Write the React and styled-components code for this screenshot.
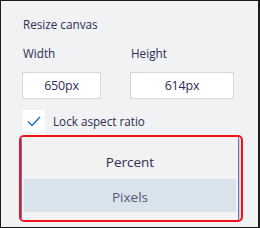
import React from "react";
import styled, { createGlobalStyle } from "styled-components";

const Global = createGlobalStyle`
  html, body { margin: 0; padding: 0; background: #f1f2f4; }
  body { font-family: "Open Sans", "Noto Sans", sans-serif; }
`;

const Frame = styled.div`
  box-sizing: border-box;
  width: 260px;
  height: 228px;
  background: #f1f2f4;
  border-style: solid;
  border-color: #1b1b1b;
  border-width: 1px 2px 1px 1px;
  padding: 15px 0 0 21px;
  display: flex;
  flex-direction: column;
  color: #2d2d52;
  overflow: hidden;
`;

const Title = styled.div`
  font-size: 11.7px;
  line-height: 16px;
  margin-left: 1px;
`;

const Fields = styled.div`
  display: flex;
  gap: 29px;
  margin-top: 13px;
`;

const Field = styled.div`
  display: flex;
  flex-direction: column;
  gap: 11px;
`;

const Label = styled.div`
  font-size: 11.7px;
  line-height: 16px;
  margin-left: 1px;
`;

const Input = styled.div`
  box-sizing: border-box;
  width: ${(p) => p.$w}px;
  height: 27px;
  background: #fff;
  border: 1px solid #d3d7de;
  display: flex;
  align-items: center;
  justify-content: center;
  font-size: 12.5px;
  color: #2d2d52;
  letter-spacing: -0.2px;
`;

const CheckRow = styled.div`
  display: flex;
  align-items: center;
  gap: 8px;
  margin-top: 11px;
  margin-left: 1px;
`;

const CheckBox = styled.div`
  width: 22px;
  height: 22px;
  background: #fff;
  display: flex;
  align-items: center;
  justify-content: center;
`;

const CheckLabel = styled.span`
  font-size: 11.7px;
  color: #2d2d52;
`;

const Highlight = styled.div`
  box-sizing: border-box;
  margin: 3px 0 0 -3px;
  width: 224px;
  height: 87px;
  border: 2px solid #f0141a;
  border-radius: 5px;
  display: flex;
  overflow: hidden;
`;

const Menu = styled.div`
  box-sizing: border-box;
  width: 218px;
  height: 100%;
  background: #f2f2f2;
  border-left: 1px solid #6c73c4;
  border-right: 1px solid #6c73c4;
  box-shadow: 2px 2px 4px rgba(0, 0, 0, 0.18);
  padding: 7px 2px 6px 2px;
  display: flex;
  flex-direction: column;
`;

const Option = styled.div`
  height: ${(p) => p.$h}px;
  display: flex;
  align-items: center;
  justify-content: center;
  font-size: 13.5px;
  color: ${(p) => (p.$selected ? "#56567a" : "#2d2d52")};
  background: ${(p) => (p.$selected ? "#d9e3eb" : "transparent")};
  padding-top: ${(p) => (p.$selected ? 2 : 0)}px;
  box-sizing: border-box;
`;

export default function App() {
  return (
    <>
      <Global />
      <Frame>
        <Title>Resize canvas</Title>
        <Fields>
          <Field>
            <Label>Width</Label>
            <Input $w={79}>650px</Input>
          </Field>
          <Field>
            <Label>Height</Label>
            <Input $w={104}>614px</Input>
          </Field>
        </Fields>
        <CheckRow>
          <CheckBox>
            <svg width="14" height="11" viewBox="0 0 14 11">
              <path d="M1 5.5 L5 9.5 L13 1" fill="none" stroke="#1f6fd0" strokeWidth="1.4" />
            </svg>
          </CheckBox>
          <CheckLabel>Lock aspect ratio</CheckLabel>
        </CheckRow>
        <Highlight>
          <Menu>
            <Option $h={35}>Percent</Option>
            <Option $h={33} $selected>Pixels</Option>
          </Menu>
        </Highlight>
      </Frame>
    </>
  );
}
